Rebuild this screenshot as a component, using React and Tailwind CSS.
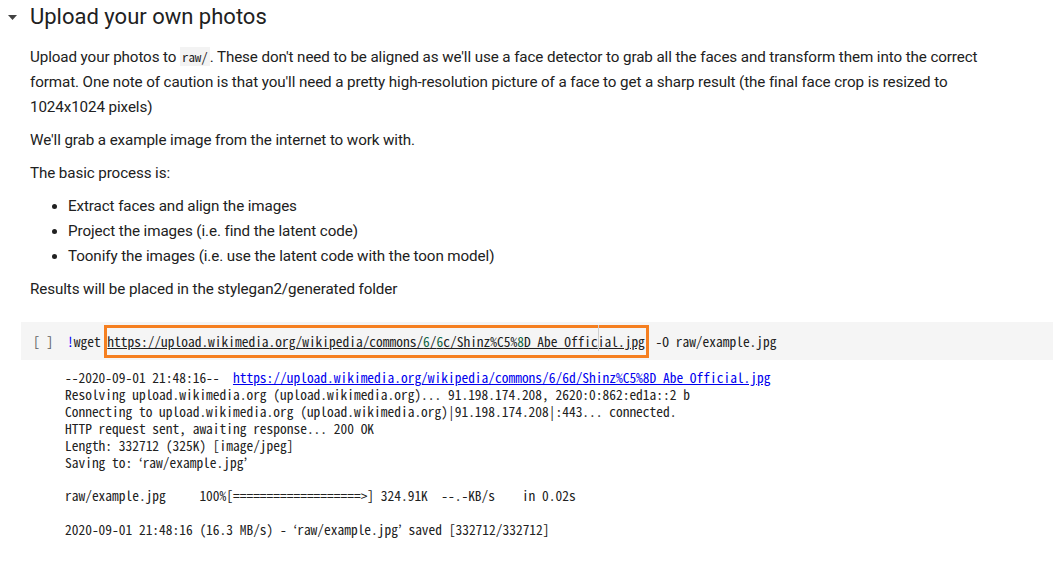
import React from "react";

const mono = "font-['Noto_Sans_Mono_CJK_KR','Liberation_Mono',monospace]";

const outputLines = [
  { parts: [{ t: "--2020-09-01 21:48:16--  " }, { t: "https://upload.wikimedia.org/wikipedia/commons/6/6d/Shinz%C5%8D_Abe_Official.jpg", link: true }] },
  { parts: [{ t: "Resolving upload.wikimedia.org (upload.wikimedia.org)... 91.198.174.208, 2620:0:862:ed1a::2 b" }] },
  { parts: [{ t: "Connecting to upload.wikimedia.org (upload.wikimedia.org)|91.198.174.208|:443... connected." }] },
  { parts: [{ t: "HTTP request sent, awaiting response... 200 OK" }] },
  { parts: [{ t: "Length: 332712 (325K) [image/jpeg]" }] },
  { parts: [{ t: "Saving to: \u2018raw/example.jpg\u2019" }] },
  { parts: [{ t: "\u00a0" }] },
  { parts: [{ t: "raw/example.jpg     100%[===================>] 324.91K  --.-KB/s    in 0.02s" }] },
  { parts: [{ t: "\u00a0" }] },
  { parts: [{ t: "2020-09-01 21:48:16 (16.3 MB/s) - \u2018raw/example.jpg\u2019 saved [332712/332712]" }] },
];

const bullets = [
  "Extract faces and align the images",
  "Project the images (i.e. find the latent code)",
  "Toonify the images (i.e. use the latent code with the toon model)",
];

export default function App() {
  return (
    <div className="w-[1053px] h-[578px] overflow-hidden bg-white font-['Roboto',sans-serif] text-[#212121]">
      {/* Section header */}
      <div className="flex items-center h-[34px] pl-[8px]">
        <svg width="9" height="5" viewBox="0 0 9 5" className="mr-[13px]">
          <path d="M0 0 L9 0 L4.5 5 Z" fill="#424242" />
        </svg>
        <h2 className="text-[22px] leading-none text-[#212121]">Upload your own photos</h2>
      </div>

      {/* Markdown body */}
      <div className="pl-[30px] pr-[40px] pt-[11px] text-[15.2px] leading-[25px] tracking-[-0.1px]">
        <p>
          Upload your photos to{" "}
          <code className={`${mono} text-[13px] leading-none bg-[#f3f3f3] px-[2px]`}>raw/</code>. These don't need to
          be aligned as we'll use a face detector to grab all the faces and transform them into the correct format. One
          note of caution is that you'll need a pretty high-resolution picture of a face to get a sharp result (the
          final face crop is resized to 1024x1024 pixels)
        </p>
        <p className="mt-[8px]">We'll grab a example image from the internet to work with.</p>
        <p className="mt-[8px]">The basic process is:</p>
        <ul className="mt-[8px] pl-[38px] list-disc">
          {bullets.map((b) => (
            <li key={b}>{b}</li>
          ))}
        </ul>
        <p className="mt-[8px]">Results will be placed in the stylegan2/generated folder</p>
      </div>

      {/* Code cell */}
      <div className={`${mono} text-[13.44px] mt-[20px] ml-[21px]`}>
        <div className="flex items-center h-[38px] bg-[#f5f5f5]">
          <span className="w-[46px] pl-[12px] text-[#616161] whitespace-pre">[ ]</span>
          <span className="whitespace-pre">
            <span className="text-[#0000ff]">!</span>wget{" "}
          </span>
          <span className="border-[3px] border-[#f57f20] h-[33px] flex items-center ml-[-3px] pr-[1px]">
            <span className="underline relative">
              https://upload.wikimedia.org/wikipedia/commons/<span className="text-[#116644]">6</span>/
              <span className="text-[#116644]">6</span>c/Shinz%C5%<span className="text-[#116644]">8</span>
              D_Abe_Offic
              <span className="relative">
                <span className="absolute left-0 top-[-6px] w-px h-[26px] bg-[#cfcfcf]" />
              </span>
              ial.jpg
            </span>
          </span>
          <span className="whitespace-pre"> -O raw/example.jpg</span>
        </div>

        {/* Output */}
        <div className="pl-[44px] pt-[9px] leading-[16.9px] text-[#212121]">
          {outputLines.map((line, i) => (
            <div key={i} className="whitespace-pre">
              {line.parts.map((p, j) =>
                p.link ? (
                  <span key={j} className="text-[#0000ee] underline">
                    {p.t}
                  </span>
                ) : (
                  <span key={j}>{p.t}</span>
                )
              )}
            </div>
          ))}
        </div>
      </div>
    </div>
  );
}
